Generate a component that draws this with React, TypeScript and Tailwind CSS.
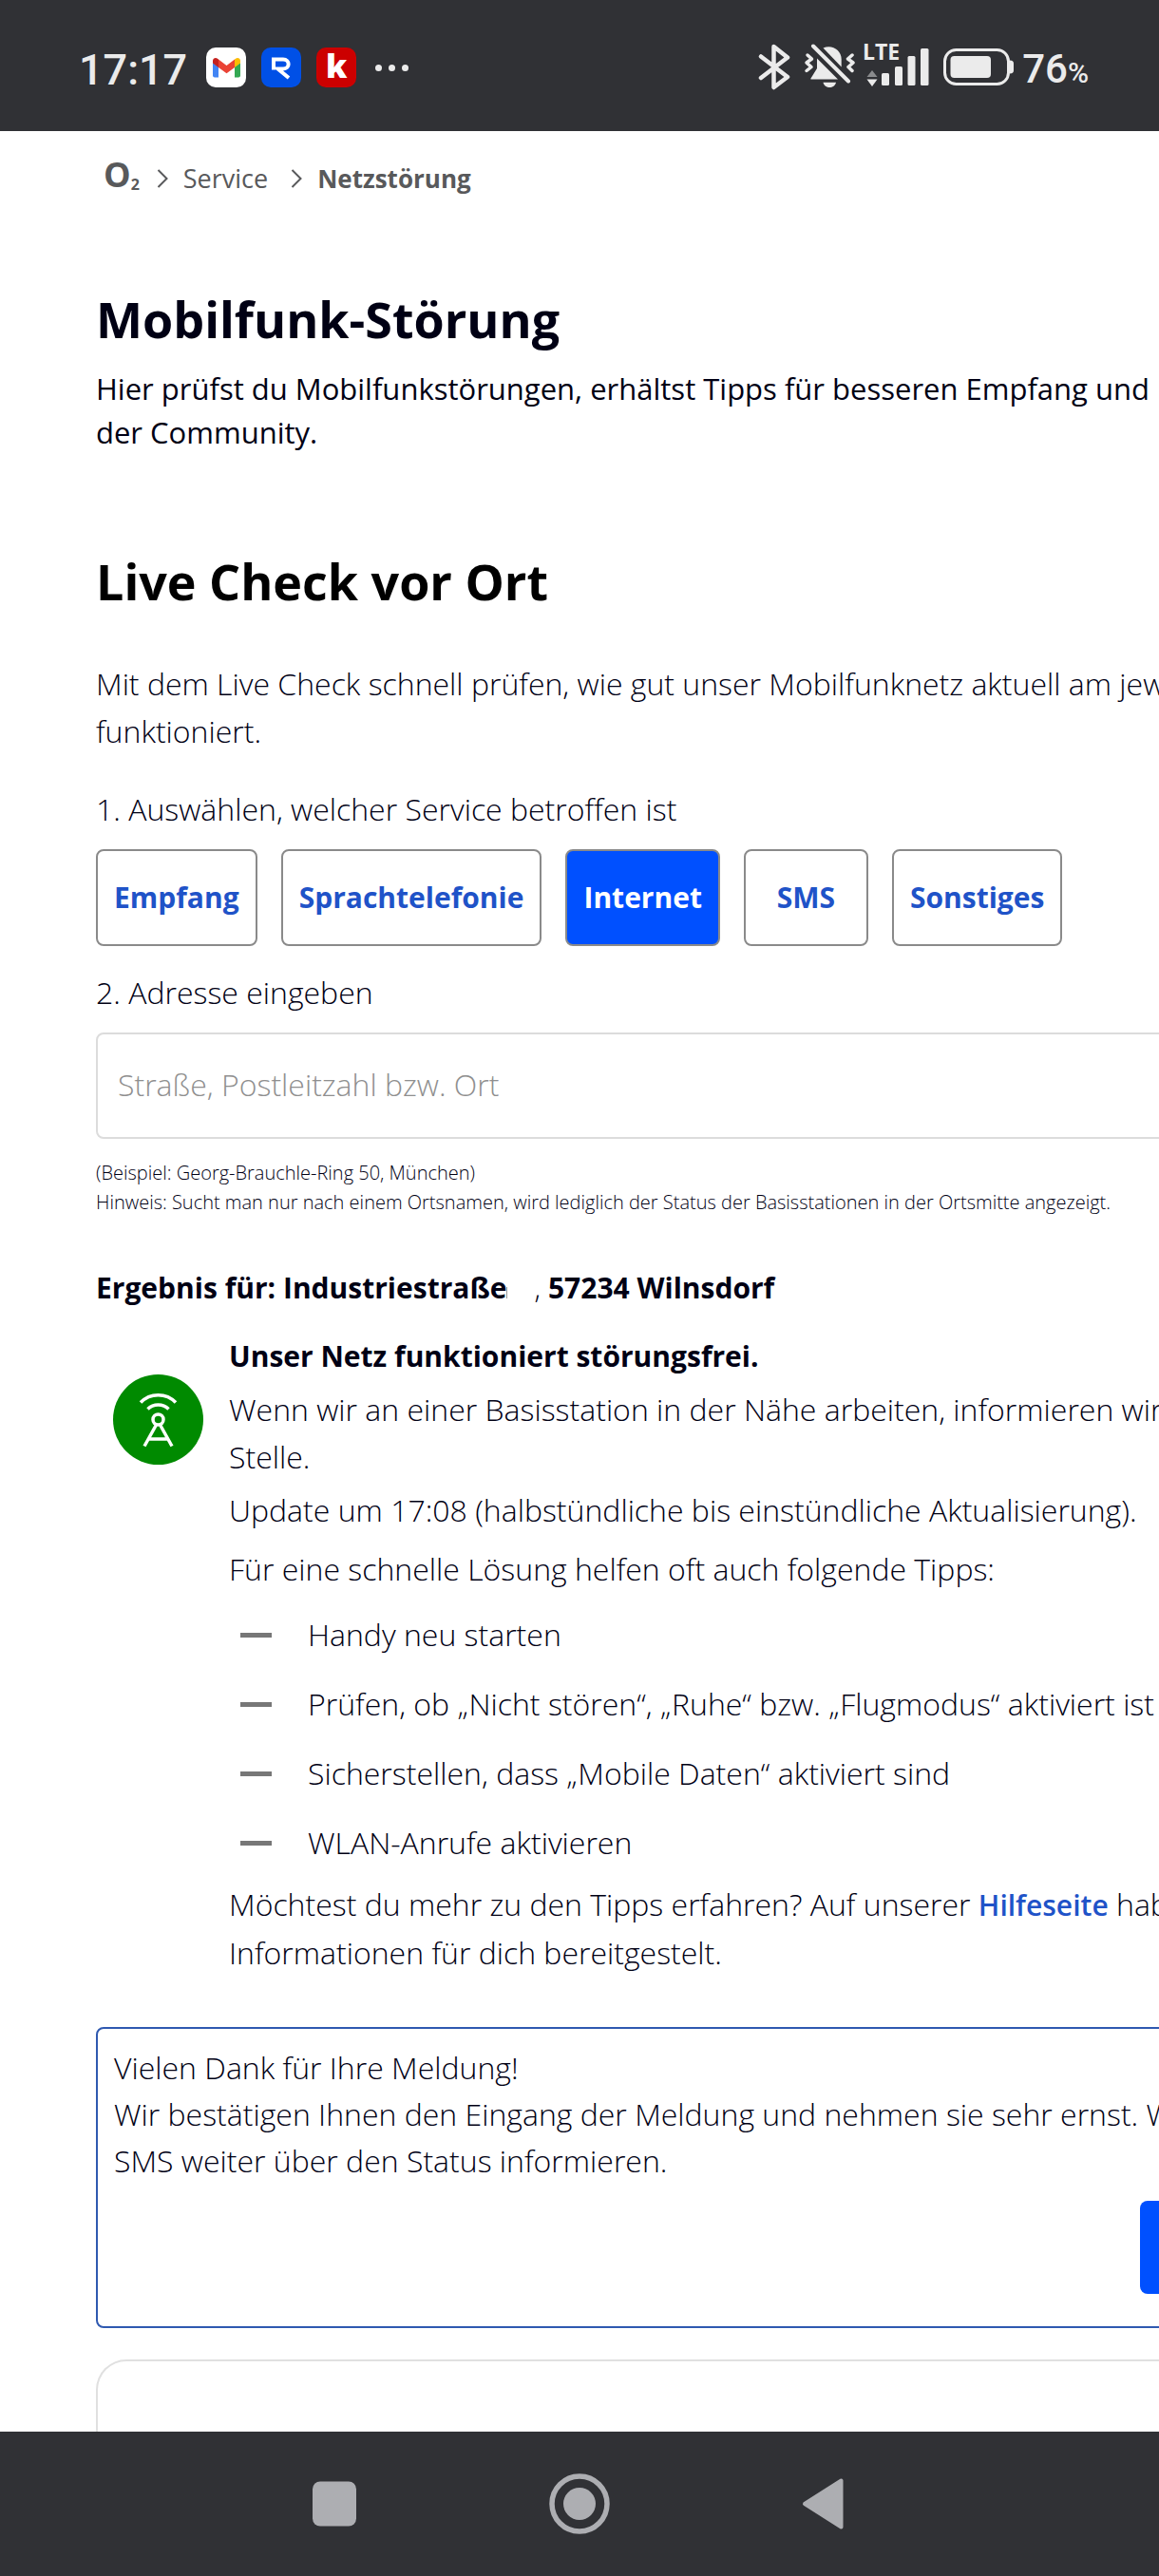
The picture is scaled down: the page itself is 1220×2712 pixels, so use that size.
import { useState } from 'react';
import { clsx } from 'clsx';

const SERVICES = ['Empfang', 'Sprachtelefonie', 'Internet', 'SMS', 'Sonstiges'];

const TIPS = [
  'Handy neu starten',
  'Prüfen, ob „Nicht stören“, „Ruhe“ bzw. „Flugmodus“ aktiviert ist',
  'Sicherstellen, dass „Mobile Daten“ aktiviert sind',
  'WLAN-Anrufe aktivieren',
];

function GmailIcon() {
  return (
    <svg viewBox="0 0 42 42" className="size-[42px]" aria-hidden="true">
      <rect width="42" height="42" rx="10" fill="#fff" />
      <path d="M7 16l6 4v11.5H9a2 2 0 0 1-2-2z" fill="#4285f4" />
      <path d="M36 16l-6 4v11.5h4a2 2 0 0 0 2-2z" fill="#34a853" />
      <path d="M30 12.5l1-.8c2-1.5 5-.4 5 2.3v2.5l-6 4.5z" fill="#fbbc04" />
      <path d="M13 12.5l8.5 6.5 8.5-6.5V21l-8.500 6.300L13 21z" fill="#ea4335" />
      <path d="M7 14c0-2.700 3-3.800 5-2.300l1 .8V21l-6-4.500z" fill="#c5221f" />
    </svg>
  );
}

function RIcon() {
  return (
    <svg viewBox="0 0 42 42" className="size-[42px]" aria-hidden="true">
      <rect width="42" height="42" rx="10" fill="#0050e6" />
      <path
        d="M13 23.5V12.5h10c7.5 0 7.5 10 0 10h-5.5L29 32"
        fill="none"
        stroke="#fff"
        strokeWidth="4"
      />
    </svg>
  );
}

function BluetoothIcon() {
  return (
    <svg viewBox="0 0 34 50" className="h-[50px] w-[34px]" aria-hidden="true">
      <path
        d="M3 13.5L31 35 16.5 46V3L31 14.5 3 36"
        fill="none"
        stroke="#ebebeb"
        strokeWidth="4.5"
        strokeLinecap="round"
        strokeLinejoin="round"
      />
    </svg>
  );
}

function SilentIcon() {
  return (
    <svg viewBox="0 0 54 50" className="h-[50px] w-[54px]" fill="#ebebeb" aria-hidden="true">
      <path d="M20.5 4.5C30 .5 39.7 7 39.7 16.5v8z" />
      <path d="M14 15.5L36 37.5H8c-.6 0-.8-.5-.5-1L14 26z" />
      <path d="M20.5 40.7h13.5c-1.5 7-12 7-13.5 0z" />
      <g fill="none" stroke="#ebebeb" strokeWidth="4" strokeLinecap="round" strokeLinejoin="round">
        <path d="M10 2.5L47 39.5" />
        <path d="M4 12l4.500 4-5.500 4 5 4.500-5 4" strokeWidth="3.5" />
        <path d="M51 12l-4.500 4 5.500 4-5 4.500 4 4" strokeWidth="3.5" />
      </g>
    </svg>
  );
}

function SignalIcon() {
  return (
    <svg viewBox="0 0 70 50" className="h-[50px] w-[70px]" fill="#ebebeb" aria-label="LTE">
      <text x="0" y="17" fontFamily="Open Sans, sans-serif" fontSize="23" fontWeight="700">
        LTE
      </text>
      <path d="M4.5 35L10 28l5.5 7z" fill="#8a8b8d" />
      <path d="M4.5 37.5h11L10 45z" />
      <rect x="20" y="31" width="8" height="13" rx="1.5" />
      <rect x="34" y="24" width="8" height="20" rx="1.5" />
      <rect x="47.5" y="13" width="8" height="31" rx="1.5" />
      <rect x="61" y="5" width="8.5" height="39" rx="1.5" />
    </svg>
  );
}

function BatteryIcon() {
  return (
    <svg viewBox="0 0 75 50" className="h-[50px] w-[75px]" fill="#ebebeb" aria-hidden="true">
      <rect x="1.5" y="6.5" width="67" height="36" rx="12" fill="none" stroke="#ebebeb" strokeWidth="3" />
      <rect x="7.5" y="13" width="42.5" height="23" rx="4" />
      <path d="M70 17.5c3 0 4 1.5 4 3.5v7c0 2-1 3.5-4 3.5z" />
    </svg>
  );
}

function AntennaIcon() {
  return (
    <svg viewBox="0 0 95 95" className="size-[95px]" aria-hidden="true">
      <circle cx="47.5" cy="47.5" r="47.5" fill="#008a00" />
      <g fill="none" stroke="#fff" strokeWidth="3.5">
        <path d="M29 29.5c10-10.500 27-10.500 37 0" />
        <path d="M36.5 36.500c6-6 16-6 22 0" />
        <circle cx="47.5" cy="47.5" r="5.5" />
        <path d="M45.5 53L33 75.5M49.5 53L62 75.5M37 68h21" />
      </g>
    </svg>
  );
}

function Chevron() {
  return (
    <svg viewBox="0 0 12 20" className="h-5 w-3" fill="none" stroke="#58595b" strokeWidth="2" aria-hidden="true">
      <path d="M1.5 1l9 9-9 9" />
    </svg>
  );
}

function StatusBar() {
  return (
    <header className="flex h-[138px] shrink-0 items-start justify-between bg-[#303135] pt-[46px] pr-[74px] pl-[83px] text-[#ebebeb]">
      <div className="flex items-start">
        <span className="font-[Roboto,sans-serif] text-[45px] leading-[56px] font-medium">17:17</span>
        <div className="ml-5 flex items-center gap-4 pt-1">
          <GmailIcon />
          <RIcon />
          <span className="flex size-[42px] items-center justify-center rounded-[10px] bg-[#cc0000] pb-1 text-[34px] leading-none font-extrabold text-white">
            k
          </span>
          <span className="ml-1 flex gap-[7px]">
            <i className="size-[7px] rounded-full bg-[#ebebeb]" />
            <i className="size-[7px] rounded-full bg-[#ebebeb]" />
            <i className="size-[7px] rounded-full bg-[#ebebeb]" />
          </span>
        </div>
      </div>
      <div className="flex items-start">
        <BluetoothIcon />
        <div className="ml-[14px] flex gap-2">
          <SilentIcon />
          <SignalIcon />
        </div>
        <div className="ml-[15px]">
          <BatteryIcon />
        </div>
        <span className="ml-2 font-[Roboto,sans-serif] text-[42px] leading-[54px] font-medium">
          76<span className="text-[30px]">%</span>
        </span>
      </div>
    </header>
  );
}

function Breadcrumb() {
  return (
    <nav aria-label="Brotkrumen" className="flex h-10 items-center text-[27px] leading-10 text-[#58595b]">
      <a href="#" aria-label="O2" className="ml-2 flex items-end pb-2 text-[36px] leading-10 font-bold">
        O<span className="text-[16px] leading-5">2</span>
      </a>
      <span className="ml-[18px]">
        <Chevron />
      </span>
      <a href="#" className="ml-4">
        Service
      </a>
      <span className="ml-6">
        <Chevron />
      </span>
      <span className="ml-4 text-[26px] font-bold">Netzstörung</span>
    </nav>
  );
}

function ServicePicker() {
  const [active, setActive] = useState('Internet');

  return (
    <div className="mt-[17px] flex gap-[25px]">
      {SERVICES.map((service) => (
        <button
          key={service}
          type="button"
          aria-pressed={service === active}
          onClick={() => setActive(service)}
          className={clsx(
            'h-[102px] min-w-[131px] rounded-lg border-2 border-[#8a8a8a] px-[17px] text-[30px] font-bold',
            service === active ? 'bg-[#0050ff] text-white' : 'bg-white text-[#1f53c8]',
          )}
        >
          {service}
        </button>
      ))}
    </div>
  );
}

function Result() {
  return (
    <section>
      <h3 className="mt-[50px] flex items-baseline text-[30px] leading-[50px] font-bold">
        Ergebnis für: Industriestraße
        <span className="h-3 w-px bg-[#999]" />
        <span className="ml-7 font-light">,</span>
        <span className="ml-2">57234 Wilnsdorf</span>
      </h3>
      <div className="mt-[22px] flex">
        <div className="w-[140px] shrink-0 pt-11 pl-[18px]">
          <AntennaIcon />
        </div>
        <div>
          <p className="text-[30px] leading-[50px] font-bold">Unser Netz funktioniert störungsfrei.</p>
          <p className="mt-1.5">
            Wenn wir an einer Basisstation in der Nähe arbeiten, informieren wir dich an dieser
            <br />
            Stelle.
          </p>
          <p className="mt-1.5">Update um 17:08 (halbstündliche bis einstündliche Aktualisierung).</p>
          <p className="mt-3">Für eine schnelle Lösung helfen oft auch folgende Tipps:</p>
          <ul className="mt-[19px] flex flex-col gap-[23px]">
            {TIPS.map((tip) => (
              <li key={tip} className="flex items-center">
                <span className="mx-3 h-[5px] w-[33px] bg-[#777]" />
                <span className="pl-[26px]">{tip}</span>
              </li>
            ))}
          </ul>
          <p className="mt-[15px]">
            Möchtest du mehr zu den Tipps erfahren? Auf unserer{' '}
            <a href="#" className="text-[30px] font-semibold text-[#1f53c8]">
              Hilfeseite
            </a>{' '}
            haben wir weitere
            <br />
            Informationen für dich bereitgestelt.
          </p>
        </div>
      </div>
    </section>
  );
}

function Confirmation() {
  return (
    <section className="mt-[53px] flex flex-col rounded-lg border-2 border-[#2f59b0] px-[17px] pt-4 pb-[34px] leading-[49px]">
      <p>
        Vielen Dank für Ihre Meldung!
        <br />
        Wir bestätigen Ihnen den Eingang der Meldung und nehmen sie sehr ernst. Wir werden Sie per
        <br />
        SMS weiter über den Status informieren.
      </p>
      <button
        type="button"
        aria-label="Schließen"
        className="mt-[18px] h-[98px] w-[180px] self-end rounded-lg bg-[#0050ff]"
      />
    </section>
  );
}

function NavBar() {
  return (
    <footer className="flex h-[152px] shrink-0 items-center justify-center gap-[194px] bg-[#303135]">
      <button type="button" aria-label="Letzte Apps" className="size-16">
        <svg viewBox="0 0 64 64" fill="#adaeb2">
          <rect x="9" y="8.5" width="46" height="47" rx="8" />
        </svg>
      </button>
      <button type="button" aria-label="Startseite" className="size-16">
        <svg viewBox="0 0 64 64" fill="#adaeb2">
          <circle cx="32" cy="32" r="29" fill="none" stroke="#adaeb2" strokeWidth="5.5" />
          <circle cx="32" cy="32" r="17" />
        </svg>
      </button>
      <button type="button" aria-label="Zurück" className="size-16">
        <svg viewBox="0 0 64 64" fill="#adaeb2" stroke="#adaeb2" strokeWidth="4" strokeLinejoin="round">
          <path d="M11 32L49.5 7.5v49z" />
        </svg>
      </button>
    </footer>
  );
}

export default function App() {
  return (
    <div className="flex min-h-screen flex-col bg-white font-['Open_Sans',sans-serif] text-[#000014]">
      <StatusBar />
      <main className="flex flex-1 overflow-hidden">
        {/* desktop-width content, runs past the right edge of the phone */}
        <div className="flex min-w-[1399px] flex-col pt-[30px] pl-[101px] text-[32px] leading-[50px] font-light whitespace-nowrap">
          <div className="font-normal">
            <Breadcrumb />
            <h1 className="mt-24 text-[52px] leading-[64px] font-bold">Mobilfunk-Störung</h1>
            <p className="mt-[18px] text-[31px] leading-[46px]">
              Hier prüfst du Mobilfunkstörungen, erhältst Tipps für besseren Empfang und Hilfe
              <br />
              der Community.
            </p>
          </div>

          <h2 className="mt-[102px] text-[52px] leading-[64px] font-bold text-black">Live Check vor Ort</h2>
          <p className="mt-[51px]">
            Mit dem Live Check schnell prüfen, wie gut unser Mobilfunknetz aktuell am jeweiligen Ort
            <br />
            funktioniert.
          </p>

          <p className="mt-8">1. Auswählen, welcher Service betroffen ist</p>
          <ServicePicker />

          <label htmlFor="address" className="mt-6">
            2. Adresse eingeben
          </label>
          <input
            id="address"
            type="text"
            placeholder="Straße, Postleitzahl bzw. Ort"
            className="mt-[17px] h-28 rounded-lg border-2 border-[#dcdcdc] px-[21px] pb-1 placeholder:text-[#8f8f8f]"
          />
          <p className="mt-5 text-[20px] leading-[31px]">
            (Beispiel: Georg-Brauchle-Ring 50, München)
            <br />
            Hinweis: Sucht man nur nach einem Ortsnamen, wird lediglich der Status der Basisstationen in der Ortsmitte
            angezeigt.
          </p>

          <Result />
          <Confirmation />
          <div className="mt-[33px] flex-1 rounded-tl-[32px] border-2 border-b-0 border-[#e0e0e0] pt-[74px]" />
        </div>
      </main>
      <NavBar />
    </div>
  );
}
